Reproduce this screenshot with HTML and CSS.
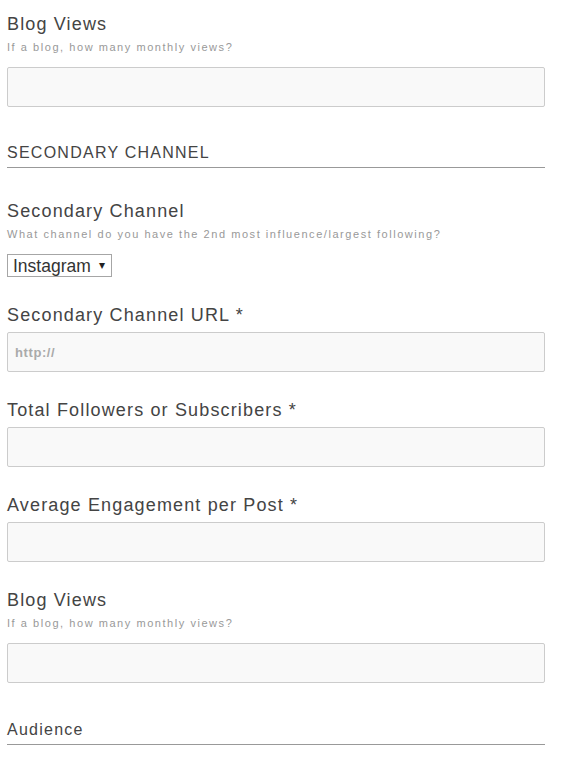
FILE: index.html
```html
<!DOCTYPE html>
<html>
<head>
<meta charset="utf-8">
<link rel="stylesheet" href="styles.css">
</head>
<body>
<form class="form">
  <div class="field">
    <label class="label">Blog Views</label>
    <div class="help">If a blog, how many monthly views?</div>
    <input class="input" type="text">
  </div>

  <h3 class="section">SECONDARY CHANNEL</h3>

  <div class="field">
    <label class="label">Secondary Channel</label>
    <div class="help">What channel do you have the 2nd most influence/largest following?</div>
    <div class="select-wrap">
      <select class="select">
        <option>Instagram</option>
      </select>
    </div>
  </div>

  <div class="field">
    <label class="label">Secondary Channel URL *</label>
    <input class="input" type="text" placeholder="http://">
  </div>

  <div class="field">
    <label class="label">Total Followers or Subscribers *</label>
    <input class="input" type="text">
  </div>

  <div class="field">
    <label class="label">Average Engagement per Post *</label>
    <input class="input" type="text">
  </div>

  <div class="field">
    <label class="label">Blog Views</label>
    <div class="help">If a blog, how many monthly views?</div>
    <input class="input" type="text">
  </div>

  <h3 class="section section-last">Audience</h3>
</form>
</body>
</html>
```

FILE: styles.css
```css
html, body {
  margin: 0;
  padding: 0;
  background: #ffffff;
}

body {
  font-family: "Liberation Sans", Arial, sans-serif;
  color: #444444;
}

.form {
  width: 538px;
  padding: 13px 0 0 7px;
  display: flex;
  flex-direction: column;
}

.field {
  display: flex;
  flex-direction: column;
  align-items: stretch;
  margin-bottom: 27px;
}

.label {
  display: block;
  font-size: 18px;
  line-height: 22px;
  letter-spacing: 1.15px;
  color: #444444;
  margin-bottom: 6px;
}

.help {
  font-size: 11px;
  line-height: 14px;
  letter-spacing: 1.55px;
  color: #999999;
  margin-top: -1px;
  margin-bottom: 13px;
}

.input {
  box-sizing: border-box;
  height: 40px;
  width: 100%;
  margin: 0;
  border: 1px solid #cccccc;
  border-radius: 2px;
  background: #f9f9f9;
  padding: 0 7px;
  font-family: "Liberation Sans", Arial, sans-serif;
  font-size: 13px;
  color: #444444;
  outline: none;
}

.input::placeholder {
  color: #aaaaaa;
  font-weight: bold;
  letter-spacing: 0.6px;
}

.select-wrap {
  position: relative;
  align-self: flex-start;
  width: 105px;
  height: 23px;
}

.select-wrap::after {
  content: "▾";
  position: absolute;
  right: 7px;
  top: 3px;
  font-size: 12px;
  line-height: 16px;
  color: #222222;
  pointer-events: none;
}

.select {
  -webkit-appearance: none;
  appearance: none;
  box-sizing: border-box;
  width: 105px;
  height: 23px;
  margin: 0;
  padding: 0 0 0 5px;
  border: 1px solid #a6a6a6;
  border-radius: 0;
  background: #ffffff;
  font-family: "Liberation Sans", Arial, sans-serif;
  font-size: 17.5px;
  color: #333333;
}

.section {
  margin: 9px 0 32px 0;
  padding-bottom: 4px;
  border-bottom: 1px solid #999999;
  font-size: 16px;
  line-height: 20px;
  font-weight: normal;
  letter-spacing: 1.25px;
  color: #444444;
}

.section-last {
  margin-top: 10px;
}
```
